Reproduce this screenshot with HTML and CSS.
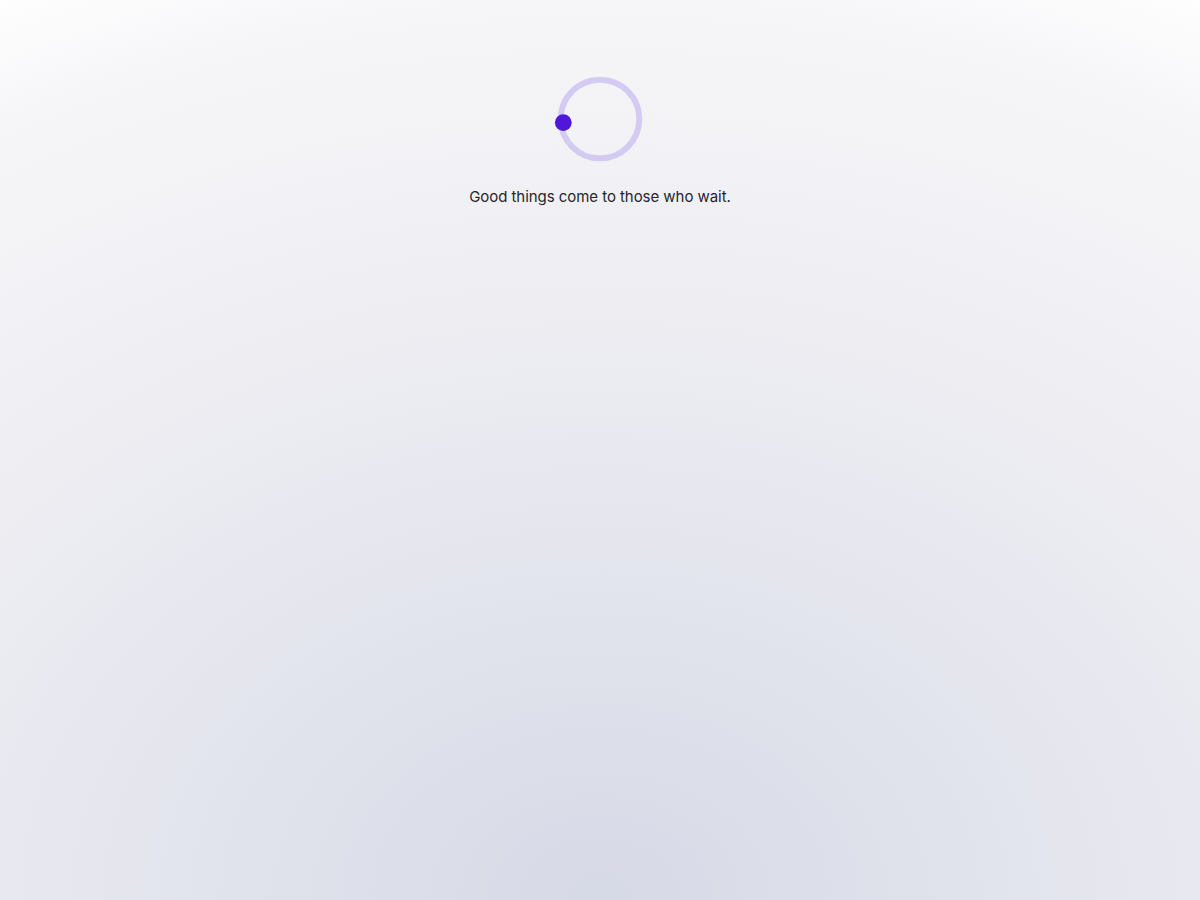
FILE: index.html
```html
<!DOCTYPE html>
<html lang="en">
<head>
<meta charset="utf-8">
<title>Loading</title>
<link rel="stylesheet" href="styles.css">
</head>
<body>
<main class="loader">
  <div class="spinner">
    <svg width="100" height="100" viewBox="0 0 100 100" aria-hidden="true">
      <circle cx="50" cy="50" r="39.3" fill="none" stroke="#d3cbf2" stroke-width="6"/>
      <circle cx="13.3" cy="53.6" r="8.4" fill="#4f17d9"/>
    </svg>
  </div>
  <p class="message">Good things come to those who wait.</p>
</main>
</body>
</html>
```
FILE: styles.css
```css
html, body {
  margin: 0;
  padding: 0;
  height: 100%;
}
body {
  background: radial-gradient(ellipse 1342px 1006px at 50% 100%, #d6d9e6 0%, #e8e9f0 45%, #efeff3 63%, #f6f6f9 89%, #fefefe 100%);
  font-family: Inter, "Open Sans", sans-serif;
  color: #25252c;
}
.loader {
  display: flex;
  flex-direction: column;
  align-items: center;
  padding-top: 69px;
}
.spinner {
  width: 100px;
  height: 100px;
}
.spinner svg {
  display: block;
}
.message {
  margin: 18px 0 0;
  font-size: 15px;
  line-height: 20px;
  letter-spacing: -0.05px;
}
```
